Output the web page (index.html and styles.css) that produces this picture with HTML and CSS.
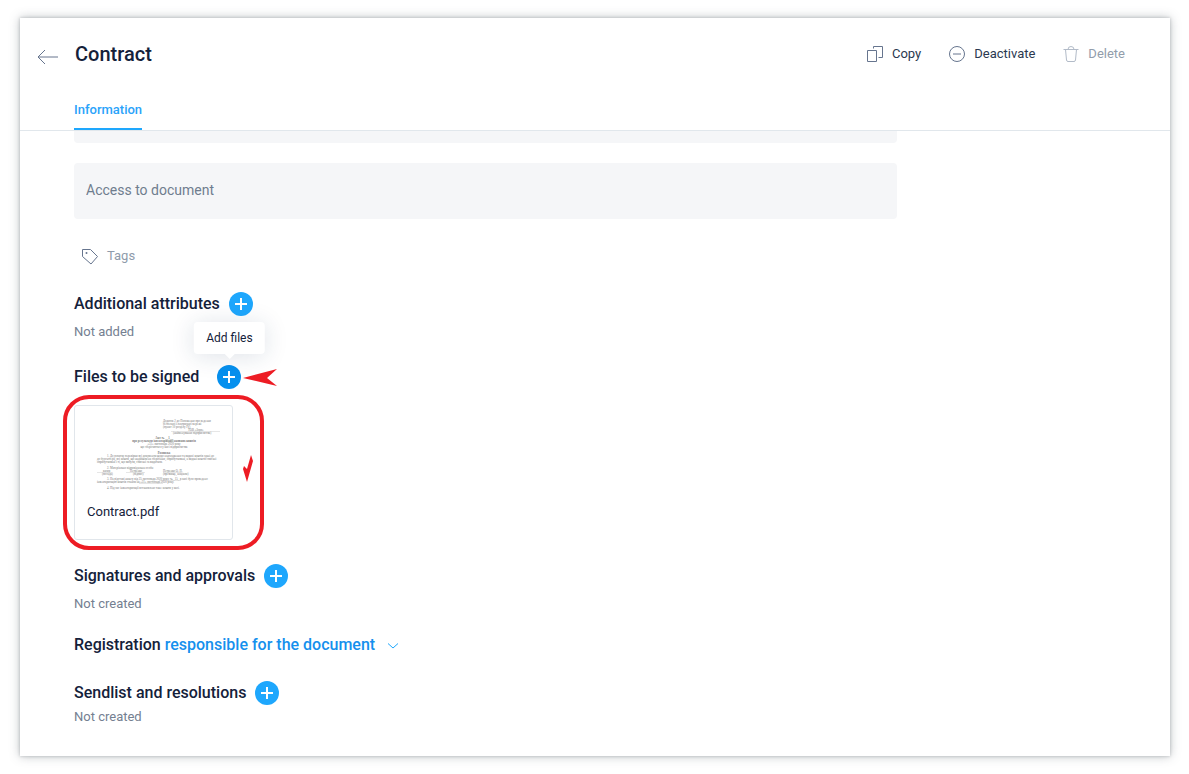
FILE: index.html
```html
<!DOCTYPE html>
<html lang="en">
<head>
    <meta charset="utf-8" />
    <title>Contract</title>
    <link rel="stylesheet" href="styles.css">
</head>
<body>
    <div class="window">
        <header class="header">
            <div class="header_top">
                <a class="back" href="#" aria-label="Back">
                    <svg width="22" height="16" viewBox="0 0 22 16"><path d="M21 8H1M8 1L1 8l7 7" /></svg>
                </a>
                <h1>Contract</h1>
                <div class="actions">
                    <button type="button" class="action">
                        <svg width="18" height="18" viewBox="0 0 18 18"><path d="M1.500 5.500h9v11h-9zM7.500 3.500v-2h9v11h-4" /></svg>
                        Copy
                    </button>
                    <button type="button" class="action">
                        <svg width="18" height="18" viewBox="0 0 18 18"><circle cx="9" cy="9" r="7.500" /><path d="M5 9h8" /></svg>
                        Deactivate
                    </button>
                    <button type="button" class="action" disabled>
                        <svg width="18" height="18" viewBox="0 0 18 18"><path d="M1.500 4.500h15M3.500 4.500l1 10.500q.2 1.500 1.500 1.500h6q1.300 0 1.500-1.500l1-10.500M6 4.500q0-3 3-3t3 3" /></svg>
                        Delete
                    </button>
                </div>
            </div>
            <nav class="tabs">
                <a class="tab" href="#">Information</a>
            </nav>
        </header>

        <main class="content">
            <div class="field_end"></div>
            <input type="text" class="field" aria-label="Access to document" placeholder="Access to document" />

            <button type="button" class="tags">
                <svg width="18" height="18" viewBox="0 0 18 18"><path d="M1.500 2.500h8l7 7-6.500 7.500-8.500-7.500z" /><circle class="dot" cx="5.500" cy="6" r="1" /></svg>
                Tags
            </button>

            <section class="block">
                <div class="block_head">
                    <h2>Additional attributes</h2>
                    <button type="button" class="add" aria-label="Add attributes">
                        <svg width="12" height="12" viewBox="0 0 12 12"><path d="M6 0v12M0 6h12" /></svg>
                    </button>
                </div>
                <p class="note">Not added</p>
            </section>

            <section class="block files">
                <div class="block_head files_head">
                    <h2>Files to be signed</h2>
                    <div class="add_wrap">
                        <button type="button" class="add add_active" aria-label="Add files">
                            <svg width="12" height="12" viewBox="0 0 12 12"><path d="M6 0v12M0 6h12" /></svg>
                        </button>
                        <span class="tooltip">Add files</span>
                        <svg class="pointer" width="34" height="18" viewBox="0 0 34 18"><path d="M0 9L34 0 24 9l10 8z" /></svg>
                    </div>
                </div>
                <div class="frame">
                    <a class="file" href="#">
                        <svg class="preview" width="133" height="80" viewBox="0 0 133 80">
                            <g font-size="3">
                                <text x="76" y="5">Додаток 2 до Положення про ведення</text>
                                <text x="76" y="8">безпечної електричної мережі</text>
                                <text x="76" y="11">(пункт 10 розділу IV)</text>
                                <text x="101" y="14">ТОВ «Зоря»</text>
                                <text x="86" y="17">(найменування підприємства)</text>
                            </g>
                            <g font-size="3" text-anchor="middle">
                                <text x="77" y="22" font-weight="bold">Акт № __1__</text>
                                <text x="77" y="25" font-weight="bold">про результати інвентаризації наявних коштів</text>
                                <text x="77" y="28">«31» листопада 2020 року</text>
                                <text x="77" y="31">що зберігаються у касі підприємства</text>
                                <text x="77" y="37" font-weight="bold">Розписка</text>
                            </g>
                            <g font-size="3">
                                <text x="20" y="40">1. До початку перевірки всі документи щодо надходження та видачі коштів здані до</text>
                                <text x="10" y="43">до бухгалтерії, всі кошти, що надійшли на зберігання, оприбутковані, а видані кошти списані</text>
                                <text x="10" y="46">оприбутковані і ті, що вибули, списані за видатком.</text>
                                <text x="20" y="52">2. Матеріально відповідальна особа:</text>
                                <text x="16" y="55">касир</text>
                                <text x="43" y="55">Петренко</text>
                                <text x="76" y="55">Петренко О. П.</text>
                                <text x="15" y="58">(посада)</text>
                                <text x="46" y="58">(підпис)</text>
                                <text x="76" y="58">(прізвище, ініціали)</text>
                                <text x="20" y="63">3. На підставі наказу від 25 листопада 2020 року № _15_ в касі було проведено</text>
                                <text x="10" y="66">інвентаризацію коштів станом на «31» листопада 2020 року.</text>
                                <text x="20" y="72">4. Під час інвентаризації встановлено таке: кошти у касі.</text>
                            </g>
                            <path d="M84 14.500h49M10 55.500h15M39 55.500h19M76 55.500h19M72 63.500h22M52 66.500h24" />
                        </svg>
                        <span class="file_name">Contract.pdf</span>
                    </a>
                    <svg class="tick" width="10" height="27" viewBox="0 0 10 27"><path d="M8 0L10 6 4 27 0 14l1-3 3 3z" /></svg>
                </div>
            </section>

            <section class="block signatures">
                <div class="block_head">
                    <h2>Signatures and approvals</h2>
                    <button type="button" class="add" aria-label="Add signatures">
                        <svg width="12" height="12" viewBox="0 0 12 12"><path d="M6 0v12M0 6h12" /></svg>
                    </button>
                </div>
                <p class="note">Not created</p>
            </section>

            <section class="block registration">
                <h2>Registration <a href="#">responsible for the document<svg width="12" height="8" viewBox="0 0 12 8"><path d="M1 1.500l5 4.500 5-4.500" /></svg></a></h2>
            </section>

            <section class="block sendlist">
                <div class="block_head">
                    <h2>Sendlist and resolutions</h2>
                    <button type="button" class="add" aria-label="Add recipients">
                        <svg width="12" height="12" viewBox="0 0 12 12"><path d="M6 0v12M0 6h12" /></svg>
                    </button>
                </div>
                <p class="note">Not created</p>
            </section>
        </main>
    </div>
</body>
</html>
```
FILE: styles.css
```css
* {
    box-sizing: border-box;
}

body {
    margin: 0;
    padding: 18px 19px 18px 20px;
    background: #fff;
    color: #14213a;
    font-family: Roboto, sans-serif;
    font-size: 13px;
}

h1, h2, p {
    margin: 0;
}

a {
    text-decoration: none;
}

button {
    font-family: inherit;
    border: none;
    background: none;
    padding: 0;
    cursor: pointer;
}

svg {
    display: block;
    flex: none;
    fill: none;
    stroke: #66758e;
}

.window {
    padding-bottom: 31px;
    background: #fff;
    box-shadow: 0 0 3px rgba(70, 80, 90, 0.3), 0 0 10px rgba(70, 80, 90, 0.35);
}

/* Header */

.header {
    border-bottom: 1px solid #e1e7ec;
}

.header_top {
    display: flex;
    align-items: center;
    height: 76px;
    padding: 0 45px 4px 17px;
}

.back {
    margin-top: 6px;
}

h1 {
    margin-left: 16px;
    font-size: 20px;
    line-height: 24px;
    font-weight: 500;
}

.actions {
    display: flex;
    gap: 27px;
    margin-left: auto;
}

.action {
    display: flex;
    align-items: center;
    gap: 8px;
    font-size: 13px;
    line-height: 18px;
    color: #2b3950;
}

.action:disabled {
    color: #929dab;
    cursor: default;
}

.action:disabled svg {
    stroke: #b2bbc8;
}

.tabs {
    display: flex;
    padding-left: 54px;
}

.tab {
    padding: 8px 0 10px;
    line-height: 16px;
    font-weight: 500;
    color: #2aa3fa;
    border-bottom: 2px solid #1ea7fd;
}

/* Content */

.content {
    max-width: 877px;
    padding-left: 54px;
}

.field_end {
    height: 12px;
    background: #f5f6f8;
    border-radius: 0 0 4px 4px;
}

.field {
    display: block;
    width: 100%;
    height: 56px;
    margin-top: 20px;
    padding: 0 12px 2px;
    border: none;
    border-radius: 4px;
    background: #f5f6f8;
    font-family: inherit;
    font-size: 14px;
}

.field::placeholder {
    color: #6f7d8e;
}

.tags {
    display: flex;
    align-items: center;
    gap: 8px;
    margin: 28px 0 27px 7px;
    font-size: 13px;
    line-height: 18px;
    color: #8f9bab;
}

.dot {
    fill: #66758e;
    stroke: none;
}

.block_head {
    display: flex;
    align-items: center;
    gap: 9px;
}

.files {
    margin-top: 25px;
}

.files_head {
    gap: 18px;
}

h2 {
    font-size: 16px;
    line-height: 24px;
    font-weight: 500;
}

h2 a {
    color: #1590ed;
}

h2 svg {
    display: inline-block;
    margin-left: 12px;
    stroke: #1ea7fd;
}

.note {
    margin-top: 8px;
    line-height: 16px;
    color: #748091;
}

.add {
    display: flex;
    align-items: center;
    justify-content: center;
    width: 24px;
    height: 24px;
    border-radius: 50%;
    background: #1ea7fd;
}

.add svg {
    stroke: #fff;
    stroke-width: 2;
}

.add_active {
    background: #0690ee;
}

.add_wrap {
    position: relative;
}

.tooltip {
    position: absolute;
    left: 50%;
    bottom: 35px;
    transform: translateX(-50%);
    padding: 8px 12px;
    border-radius: 4px;
    background: #fff;
    box-shadow: 0 2px 24px rgba(20, 50, 90, 0.14);
    font-size: 12px;
    line-height: 16px;
    white-space: nowrap;
}

.tooltip::after {
    content: "";
    position: absolute;
    left: 50%;
    top: 100%;
    margin-left: -5px;
    border: 5px solid transparent;
    border-top-color: #fff;
}

.pointer {
    position: absolute;
    left: 26px;
    top: 4px;
    fill: #ed1c24;
    stroke: none;
}

.frame {
    display: flex;
    align-items: center;
    gap: 10px;
    width: fit-content;
    margin: 6px 0 0 -11px;
    padding: 6px 7px;
    border: 4px solid #ed1c24;
    border-radius: 26px;
}

.file {
    display: block;
    padding: 11px 12px 19px;
    border: 1px solid #e1e6eb;
    border-radius: 3px;
    color: #14213a;
}

.file_name {
    display: block;
    margin-top: 7px;
    line-height: 16px;
}

.preview {
    font-family: "Liberation Serif", serif;
}

.preview text {
    fill: #777;
    stroke: none;
}

.preview path {
    stroke: #ccc;
    stroke-width: 0.5;
}

.tick {
    margin-bottom: 8px;
    fill: #ed1c24;
    stroke: none;
}

.signatures {
    margin-top: 14px;
}

.registration {
    margin-top: 21px;
}

.sendlist {
    margin-top: 24px;
}

.sendlist .note {
    margin-top: 4px;
}
```
